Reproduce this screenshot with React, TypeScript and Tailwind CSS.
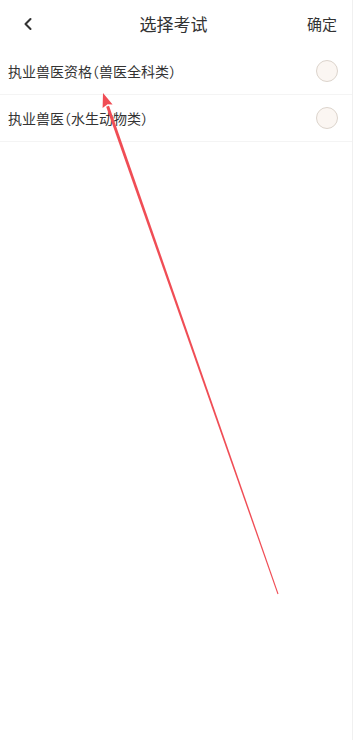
import { ChevronLeft } from "lucide-react"

const exams = [
  { id: 1, name: "执业兽医资格（兽医全科类）" },
  { id: 2, name: "执业兽医（水生动物类）" },
]

export default function App() {
  return (
    <div
      className="relative min-h-[740px] w-[353px] bg-white border-r border-[#f0f0f0] text-[#333]"
      style={{ fontFamily: '"Noto Sans CJK SC", "Noto Sans", sans-serif' }}
    >
      {/* 顶部导航 */}
      <div className="flex h-12 items-center justify-between px-[18px]">
        <ChevronLeft className="h-5 w-5 text-[#333]" strokeWidth={2.5} />
        <div className="text-[17px] ml-[2px]">选择考试</div>
        <div className="text-[15px] -mr-[3px]">确定</div>
      </div>

      {/* 考试列表 */}
      {exams.map((exam) => (
        <div
          key={exam.id}
          className="flex h-[47px] items-center justify-between border-b border-[#f4f4f4] pl-2 pr-[14px]"
        >
          <span className="text-[14px] [font-feature-settings:'halt']">{exam.name}</span>
          <span className="h-[22px] w-[22px] rounded-full border border-[#dcd4cc] bg-[#fbf6f2]" />
        </div>
      ))}

      {/* 红色箭头标注 */}
      <svg className="pointer-events-none absolute left-0 top-0" width="354" height="740">
        <polygon points="109,105.7 106.2,106.7 277.5,594.2 278.5,593.8" fill="#f04d55" />
        <polygon points="103,93 112.6,104.6 107.6,104.2 102.6,108" fill="#f04d55" />
      </svg>
    </div>
  )
}
